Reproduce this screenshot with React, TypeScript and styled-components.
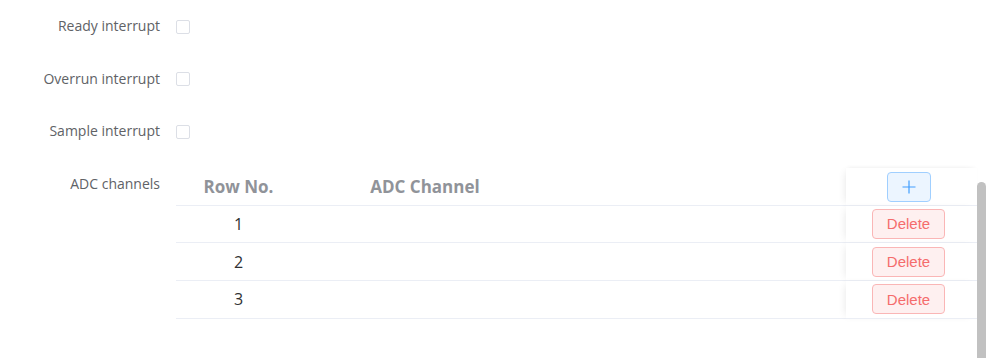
import React from "react";
import styled, { createGlobalStyle } from "styled-components";

const Global = createGlobalStyle`
  html, body { margin: 0; padding: 0; background: #fff; overflow: hidden; }
  body { font-family: "Open Sans", "Noto Sans", sans-serif; }
`;

const Page = styled.div`
  padding-top: 10px;
  display: flex;
  flex-direction: column;
  gap: 20.5px;
`;

const FormItem = styled.div`
  display: flex;
  align-items: flex-start;
  gap: 16px;
  flex: none;
`;

const Label = styled.div`
  width: 160px;
  flex: none;
  text-align: right;
  font-size: 14px;
  line-height: 32px;
  color: #606266;
`;

const Control = styled.div`
  height: 32px;
  display: flex;
  align-items: center;
`;

const Checkbox = styled.span`
  display: inline-block;
  width: 14px;
  height: 14px;
  box-sizing: border-box;
  border: 1px solid #dcdfe6;
  border-radius: 2px;
  background: #fff;
  margin-top: 1px;
`;

const TableArea = styled.div`
  display: flex;
  align-items: flex-start;
`;

const Table = styled.div`
  width: 801px;
  display: grid;
  grid-template-columns: 125px 248px 1fr 131px;
`;

const Cell = styled.div<{ $head?: boolean; $fixed?: boolean }>`
  height: ${(p) => (p.$head ? "38px" : "37.75px")};
  box-sizing: border-box;
  border-bottom: 1px solid #ebeef5;
  display: flex;
  align-items: center;
  justify-content: center;
  font-size: ${(p) => (p.$head ? "17px" : "16px")};
  font-weight: ${(p) => (p.$head ? 700 : 400)};
  color: ${(p) => (p.$head ? "#909399" : "#303133")};
  padding-top: ${(p) => (p.$head ? "1px" : "0")};
  background: #fff;
  ${(p) =>
    p.$fixed &&
    `
    padding-right: 6px;
    position: relative;
    z-index: 1;
    box-shadow: -4px 0 8px -4px rgba(0,0,0,0.10);
  `}
  ${(p) => p.$head && p.$fixed && `box-shadow: -4px 0 8px -4px rgba(0,0,0,0.10), 0 -2px 4px -2px rgba(0,0,0,0.06);`}
`;

const PlusButton = styled.button`
  width: 44px;
  height: 30px;
  box-sizing: border-box;
  border: 1px solid #a0cfff;
  background: #ecf5ff;
  border-radius: 4px;
  padding: 0;
  display: flex;
  align-items: center;
  justify-content: center;
  cursor: pointer;
`;

const DeleteButton = styled.button`
  width: 73px;
  height: 30px;
  box-sizing: border-box;
  border: 1px solid #fab6b6;
  background: #fef0f0;
  color: #f56c6c;
  border-radius: 4px;
  font-family: "Liberation Sans", Arial, sans-serif;
  font-size: 15px;
  padding: 0;
  cursor: pointer;
`;

const ScrollTrack = styled.div`
  width: 9px;
  padding-top: 14px;
`;

const ScrollThumb = styled.div`
  width: 9px;
  height: 176px;
  background: #c1c1c1;
  border-radius: 5px 5px 0 0;
`;

const rows = [1, 2, 3];

export default function App() {
  return (
    <>
      <Global />
      <Page>
        {["Ready interrupt", "Overrun interrupt", "Sample interrupt"].map((l) => (
          <FormItem key={l}>
            <Label>{l}</Label>
            <Control>
              <Checkbox />
            </Control>
          </FormItem>
        ))}
        <FormItem>
          <Label>ADC channels</Label>
          <TableArea>
            <Table>
              <Cell $head>Row No.</Cell>
              <Cell $head>ADC Channel</Cell>
              <Cell $head />
              <Cell $head $fixed>
                <PlusButton>
                  <svg width="14" height="14" viewBox="0 0 14 14">
                    <path d="M7 0.5V13.5M0.5 7H13.5" stroke="#409eff" strokeWidth="1.2" fill="none" />
                  </svg>
                </PlusButton>
              </Cell>
              {rows.map((r) => (
                <React.Fragment key={r}>
                  <Cell>{r}</Cell>
                  <Cell />
                  <Cell />
                  <Cell $fixed>
                    <DeleteButton>Delete</DeleteButton>
                  </Cell>
                </React.Fragment>
              ))}
            </Table>
            <ScrollTrack>
              <ScrollThumb />
            </ScrollTrack>
          </TableArea>
        </FormItem>
      </Page>
    </>
  );
}
